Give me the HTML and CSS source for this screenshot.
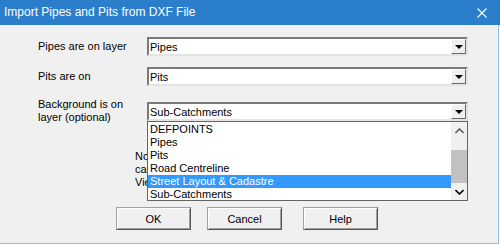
FILE: index.html
```html
<!DOCTYPE html>
<html lang="en">
<head>
    <meta charset="UTF-8">
    <title>Import Pipes and Pits from DXF File</title>
    <link rel="stylesheet" href="styles.css">
</head>
<body>
    <div class="window">
        <div class="titlebar">
            <span class="title">Import Pipes and Pits from DXF File</span>
            <svg class="close" width="10" height="10" viewBox="0 0 10 10">
                <path d="M0.5 0.5 L9.5 9.5 M9.5 0.5 L0.5 9.5" stroke="#fff" stroke-width="1.1" fill="none"/>
            </svg>
        </div>
        <div class="content">
            <div class="field-row row-pipes">
                <label class="field-label">Pipes are on layer</label>
                <div class="combo">
                    <span class="combo-text">Pipes</span>
                    <span class="combo-btn"><i class="arrow"></i></span>
                </div>
            </div>
            <div class="field-row row-pits">
                <label class="field-label">Pits are on</label>
                <div class="combo">
                    <span class="combo-text">Pits</span>
                    <span class="combo-btn"><i class="arrow"></i></span>
                </div>
            </div>
            <div class="field-row row-bg">
                <label class="field-label">Background is on<br>layer (optional)</label>
                <div class="combo-wrap">
                    <div class="combo">
                        <span class="combo-text">Sub-Catchments</span>
                        <span class="combo-btn"><i class="arrow"></i></span>
                    </div>
                    <!-- open dropdown list, lies over the note -->
                    <div class="dropdown">
                        <ul class="dropdown-items">
                            <li>DEFPOINTS</li>
                            <li>Pipes</li>
                            <li>Pits</li>
                            <li>Road Centreline</li>
                            <li class="selected">Street Layout &amp; Cadastre</li>
                            <li>Sub-Catchments</li>
                        </ul>
                        <div class="scrollbar">
                            <span class="scroll-btn">
                                <svg width="9" height="6" viewBox="0 0 9 6"><path d="M0.5 5 L4.5 1 L8.5 5" stroke="#606060" stroke-width="1.6" fill="none"/></svg>
                            </span>
                            <span class="scroll-track"><span class="scroll-thumb"></span></span>
                            <span class="scroll-btn">
                                <svg width="9" height="6" viewBox="0 0 9 6"><path d="M0.5 1 L4.5 5 L8.5 1" stroke="#000" stroke-width="1.6" fill="none"/></svg>
                            </span>
                        </div>
                    </div>
                </div>
            </div>
            <!-- only the start of the note shows beside the open list -->
            <p class="note">Note: only layers with lines<br>can be imported. Use the<br>View menu to check them.</p>
            <div class="buttons">
                <button type="button" class="btn btn-ok">OK</button>
                <button type="button" class="btn btn-cancel">Cancel</button>
                <button type="button" class="btn btn-help">Help</button>
            </div>
        </div>
    </div>
</body>
</html>
```

FILE: styles.css
```css
/* Windows style dialog */
body {
    margin: 0;
    padding: 0;
    background-color: #fff;
    font-family: 'Liberation Sans', Arial, sans-serif;
    font-size: 11px;
    color: #000;
}
.window {
    width: 499px;
    height: 244px;
    display: flex;
    flex-direction: column;
}
.titlebar {
    height: 25px;
    width: 500px;
    background-color: #2a7ecb;
    display: flex;
    align-items: center;
    justify-content: space-between;
    flex-shrink: 0;
}
.title {
    color: #fff;
    font-size: 12px;
    padding-left: 4px;
    padding-bottom: 1px;
}
.close {
    margin-right: 13px;
}
.content {
    flex: 1;
    background-color: #f0f0f0;
    border-right: 1px solid #8cbfeb;
    border-bottom: 1px solid #8cbfeb;
    padding-left: 38px;
    display: flex;
    flex-direction: column;
}
.field-row {
    display: flex;
    align-items: center;
}
.row-pipes {
    margin-top: 12px;
}
.row-pits {
    margin-top: 11px;
}
.row-bg {
    margin-top: 12px;
    align-items: flex-start;
}
.field-label {
    width: 109px;
    line-height: 13px;
}
.row-bg .combo-wrap {
    margin-top: 4px;
    position: relative;
    z-index: 1;
}
.combo {
    width: 317px;
    height: 15px;
    background-color: #fff;
    border-top: 2px solid #7a7a7a;
    border-left: 2px solid #7a7a7a;
    border-right: 2px solid #e3e3e3;
    border-bottom: 2px solid #e3e3e3;
    display: flex;
    align-items: center;
    justify-content: space-between;
}
.combo-text {
    padding-left: 1px;
    font-size: 11px;
}
.combo-btn {
    width: 15px;
    height: 15px;
    box-sizing: border-box;
    background-color: #f0f0f0;
    border-top: 1px solid #fff;
    border-left: 1px solid #fff;
    border-right: 1px solid #696969;
    border-bottom: 1px solid #696969;
    display: flex;
    align-items: center;
    justify-content: center;
}
.arrow {
    width: 0;
    height: 0;
    border-left: 4px solid transparent;
    border-right: 4px solid transparent;
    border-top: 4px solid #000;
    margin-top: 1px;
}
.dropdown {
    position: absolute;
    top: 19px;
    left: 0;
    width: 319px;
    height: 78px;
    background-color: #fff;
    border: 1px solid #646464;
    display: flex;
}
.dropdown-items {
    list-style: none;
    margin: 0;
    padding: 1px 0 0 0;
    flex: 1;
}
.dropdown-items li {
    height: 13px;
    line-height: 13px;
    padding-left: 2px;
}
.dropdown-items li.selected {
    background-color: #3399ff;
    color: #fff;
}
.scrollbar {
    width: 16px;
    background-color: #f0f0f0;
    display: flex;
    flex-direction: column;
}
.scroll-btn {
    height: 17px;
    display: flex;
    align-items: center;
    justify-content: center;
}
.scroll-track {
    flex: 1;
    display: flex;
    flex-direction: column;
}
.scroll-thumb {
    margin-top: 11px;
    height: 33px;
    background-color: #c1c1c1;
}
.note {
    margin: 26px 0 0 97px;
    width: 12px;
    height: 39px;
    overflow: hidden;
    line-height: 13px;
    white-space: nowrap;
}
.buttons {
    display: flex;
    margin-top: 18px;
    padding-left: 78px;
}
.btn {
    width: 75px;
    height: 23px;
    font-family: 'Liberation Sans', Arial, sans-serif;
    font-size: 11px;
    background-color: #f0f0f0;
    border-top: 1px solid #a0a0a0;
    border-left: 1px solid #a0a0a0;
    border-right: 1px solid #555;
    border-bottom: 1px solid #555;
    box-shadow: inset 1px 1px #fff, inset -1px -1px #a0a0a0;
    padding: 0;
    color: #000;
}
.btn-cancel {
    margin-left: 16px;
}
.btn-help {
    margin-left: 21px;
}
```
